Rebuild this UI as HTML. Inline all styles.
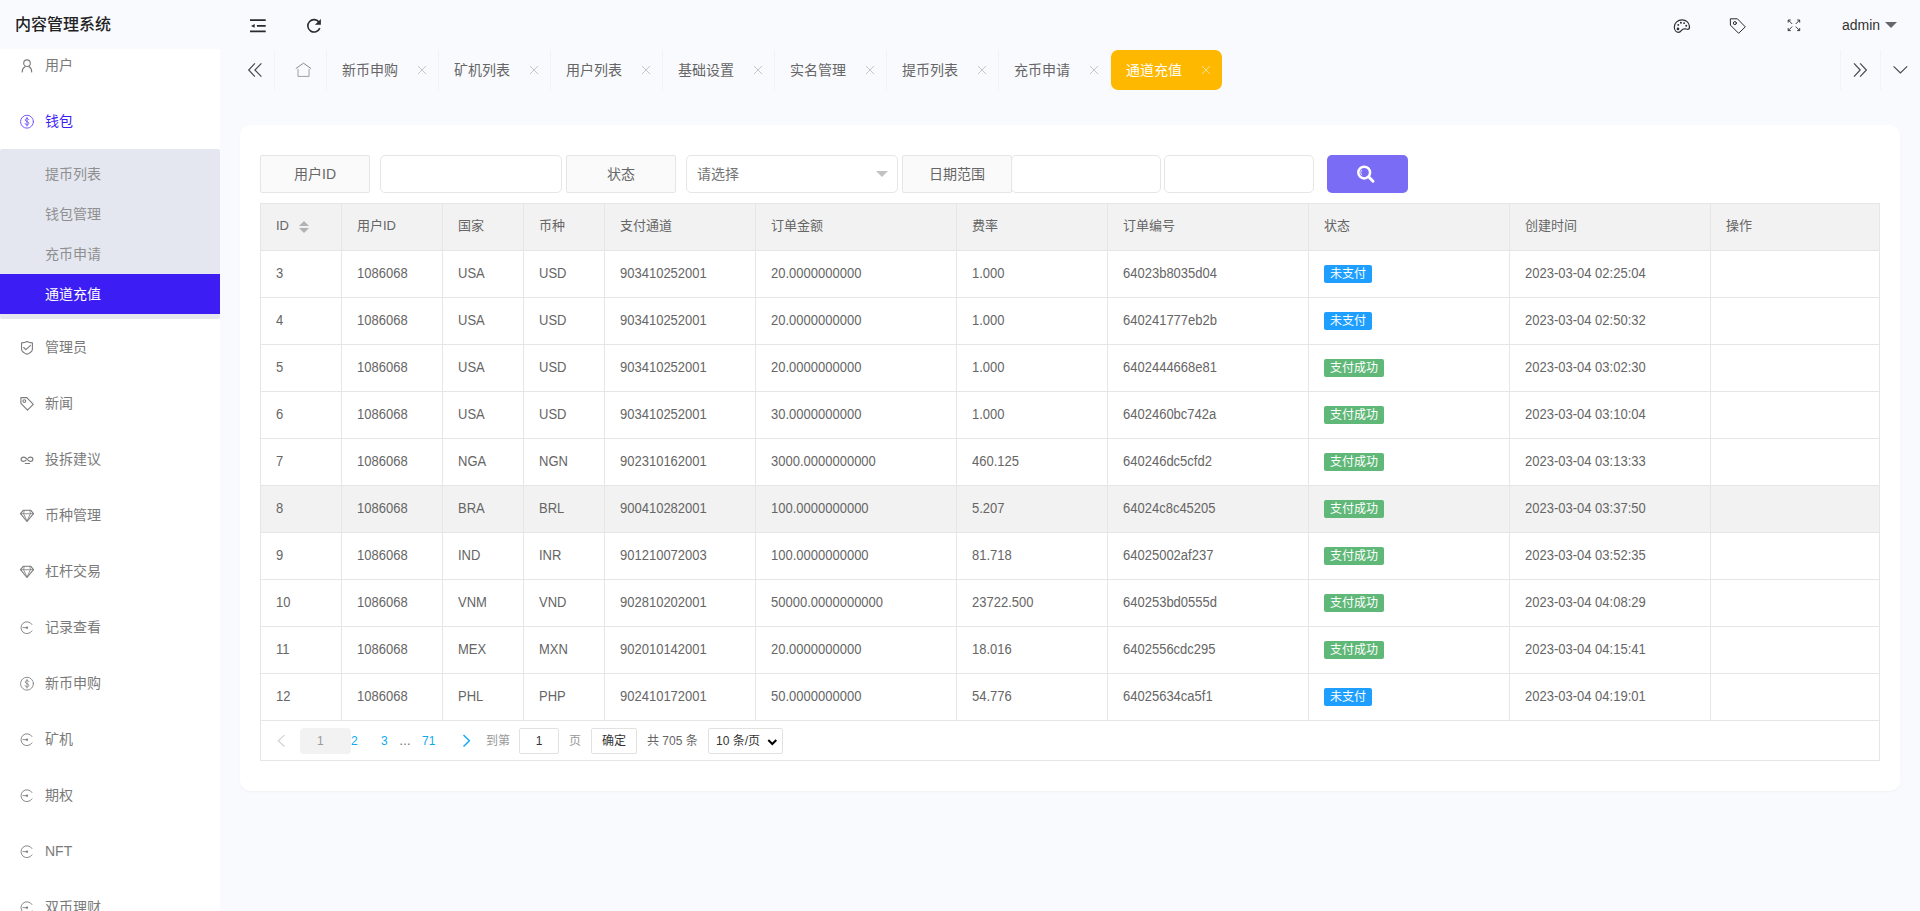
<!DOCTYPE html>
<html lang="zh-CN">
<head>
<meta charset="utf-8">
<title>内容管理系统</title>
<style>
*{box-sizing:border-box;margin:0;padding:0}
html,body{width:1920px;height:911px;overflow:hidden}
body{background:#f9fafe;font-family:"Liberation Sans","Noto Sans CJK SC",sans-serif;font-size:14px;color:#666;position:relative;line-height:1}
a{text-decoration:none;color:inherit}
i{font-style:normal}
svg{display:block}
.logo{position:absolute;left:15px;top:1px;height:49px;line-height:48px;font-size:16px;font-weight:500;color:#222;white-space:nowrap}
.side{position:absolute;left:0;top:49px;width:220px;height:862px;background:#fff;overflow:hidden}
.side .mi{position:absolute;left:0;width:220px;height:56px;margin-top:-49px;color:#7a7a7a;display:block}
.side .mi span{position:absolute;left:45px;top:0;line-height:56px;font-size:14px;white-space:nowrap}
.side .mi svg{position:absolute;left:19px;top:20px;width:16px;height:16px;overflow:visible;color:#7b7b7b;stroke-width:1.1}
.side .mi.on svg{color:#5a40f6}
.side .mi.on{color:#3c1ef5}
.side .sub{position:absolute;left:0;width:220px;height:170px;margin-top:-49px;background:#e4e7ef;border-radius:2px;padding:5px 0}
.side .si{display:block;height:40px;line-height:40px;padding-left:45px;color:#8f8f8f;font-size:14px}
.side .si.act{background:#3c1ef5;color:#fff}
.hd{position:absolute;left:220px;top:0;width:1700px;height:50px}
.hd .hi{position:absolute;width:16px;height:16px;margin-left:-220px;color:#2a2a2a}
.hd .hi svg{width:16px;height:16px;overflow:visible}
.hd .admin{position:absolute;left:1622px;top:0;line-height:50px;font-size:14px;color:#333}
.hd .caret{position:absolute;left:1665px;top:22px;width:0;height:0;border:6px solid transparent;border-top-color:#666;border-bottom:0}
.tabs{position:absolute;left:0;top:50px;width:1920px;height:40px}
.tabs .tb{position:absolute;top:0;height:40px;border-right:1px solid #f3f2f4;color:#4a4a4a}
.tabs .tb.hm{color:#8a8a8a}
.tabs .tb.r{border-right:0;border-left:1px solid #f3f2f4}
.tabs .tb svg{position:absolute;left:50%;top:50%;width:16px;height:16px;margin:-8px 0 0 -8px;overflow:visible}
.tabs .tab{position:absolute;top:0;width:112px;height:40px;border-right:1px solid #f3f2f4;color:#666;font-size:14px}
.tabs .tab span{position:absolute;left:15px;top:0;line-height:40px;white-space:nowrap}
.tabs .tab b{position:absolute;left:90px;top:15px;width:10px;height:10px;color:#c3c3cc;font-weight:normal}
.tabs .tab b svg{width:10px;height:10px;overflow:visible}
.tabs .tab.on{background:#ffb800;color:#fff;border-radius:7px;border:0;left:1111px !important;width:111px}
.tabs .tab.on span{left:15px}
.tabs .tab.on b{left:90px;color:#ffdf90}
.card{position:absolute;left:240px;top:125px;width:1660px;height:666px;background:#fff;border-radius:10px;box-shadow:0 1px 2px 0 rgba(0,0,0,.04)}
.form{position:absolute;left:0;top:30px;width:1660px;height:38px}
.form .lb{position:absolute;top:0;width:110px;height:38px;line-height:36px;text-align:center;border:1px solid #e6e6e6;background:#fafafa;border-radius:2px;color:#666;font-size:14px}
.form .ip{position:absolute;top:0;height:38px;border:1px solid #e6e6e6;border-radius:5px;background:#fff}
.form .sel span{position:absolute;left:10px;top:0;line-height:36px;color:#757575;font-size:14px}
.form .sel i{position:absolute;right:9px;top:15px;width:0;height:0;border:6px solid transparent;border-top-color:#c2c2c2;border-bottom:0}
.form .btn{position:absolute;top:0;width:81px;height:38px;border:0;border-radius:5px;background:#7b6cf6;color:#fff}
.form .btn svg{position:absolute;left:30px;top:9px;width:20px;height:20px;overflow:visible}
.tbl{position:absolute;left:20px;top:78px;width:1620px;table-layout:fixed;border-collapse:separate;border-spacing:0;border:1px solid #e6e6e6;border-right:0;border-bottom:0;font-size:13px;color:#666}
.tbl th,.tbl td{height:47px;border-right:1px solid #e6e6e6;border-bottom:1px solid #e6e6e6;padding:0 0 2px 15px;text-align:left;font-weight:normal;white-space:nowrap;vertical-align:middle;overflow:hidden}
.tbl th{background:#f2f2f2;height:47px;padding-bottom:3px}
.tbl tr.hv td{background:#f2f2f2}
.tbl .sort{display:inline-block;position:relative;width:10px;height:0;margin-left:10px;vertical-align:baseline}
.tbl .sort i{position:absolute;left:0;width:0;height:0;border:5px solid transparent}
.tbl .sort .up{top:-9px;border-bottom-color:#b2b2b2;border-top:0}
.tbl .sort .dn{top:-2px;border-top-color:#b2b2b2;border-bottom:0}
.tbl .n{display:inline-block;transform:scaleY(1.075);transform-origin:50% 78%}
.tag{position:relative;top:1px;display:inline-block;height:18px;line-height:18px;padding:0 6px;font-size:12px;color:#fff;border-radius:2px;vertical-align:middle}
.tag.b{background:#1e9fff}
.tag.g{background:#5fb878}
.pg{position:absolute;left:20px;top:595px;width:1620px;height:41px;border:1px solid #e6e6e6;font-size:12px;color:#666}
.pg>*{position:absolute;white-space:nowrap}
.pg .pv{left:15px;top:13px;width:12px;height:12px;color:#d2d2d2}
.pg .nx{left:199px;top:13px;width:12px;height:12px;color:#10a9f0}
.pg svg{width:12px;height:12px;overflow:visible}
.pg .cur{left:39px;top:7px;width:51px;height:26px;line-height:26px;background:#f2f2f2;border-radius:4px;color:#999;text-indent:17px}
.pg a{top:7px;line-height:26px;color:#10a9f0;font-size:12px}
.pg .dots{left:138px;top:7px;line-height:26px;color:#666}
.pg .t1{left:225px;top:7px;line-height:26px;color:#999}
.pg .pin{left:258px;top:7px;width:40px;height:26px;line-height:24px;border:1px solid #e2e2e2;border-radius:2px;text-align:center;color:#333;background:#fff}
.pg .t2{left:308px;top:7px;line-height:26px;color:#999}
.pg .pbtn{left:330px;top:7px;width:46px;height:26px;line-height:24px;border:1px solid #e2e2e2;border-radius:2px;text-align:center;color:#333;background:#fff}
.pg .t3{left:386px;top:7px;line-height:26px;color:#666}
.pg .psel{left:447px;top:7px;width:75px;height:26px;line-height:24px;border:1px solid #e2e2e2;border-radius:2px;padding-left:7px;color:#333;background:#fff}
.pg .psel svg{position:absolute;right:5px;top:8px;width:10px;height:10px}

</style>
</head>
<body>
<div class="logo">内容管理系统</div>
<div class="side">
<a class="mi" style="top:37px"><svg viewBox="0 0 16 16" fill="none" stroke="currentColor" stroke-width="1" stroke-linecap="round" stroke-linejoin="round" ><circle cx="8" cy="6.2" r="3.3"/><path d="M3.200 14.900C3.200 12.300 4.300 10.600 6.100 9.800M9.900 9.800C11.700 10.600 12.700 12.300 12.700 14.900"/></svg><span>用户</span></a>
<a class="mi on" style="top:93px"><svg viewBox="0 0 16 16" fill="none" stroke="currentColor" stroke-width="1" stroke-linecap="round" stroke-linejoin="round" ><circle cx="8" cy="8.700" r="6.450" stroke-width=".85"/><path d="M9.800 6.700C9.500 5.900 8.900 5.500 8 5.500C7 5.500 6.300 6.100 6.300 6.900C6.300 9 9.800 8.200 9.800 10.400C9.800 11.300 9 11.900 8 11.900C7 11.900 6.300 11.400 6.100 10.600M8 4.400V13" stroke-width=".8"/></svg><span>钱包</span></a>
<div class="sub" style="top:149px">
<a class="si"><span>提币列表</span></a>
<a class="si"><span>钱包管理</span></a>
<a class="si"><span>充币申请</span></a>
<a class="si act"><span>通道充值</span></a>
</div>
<a class="mi" style="top:319px"><svg viewBox="0 0 16 16" fill="none" stroke="currentColor" stroke-width="1" stroke-linecap="round" stroke-linejoin="round" ><path d="M8 2.500C6.500 3.300 4.500 3.800 2.550 3.900V10.300C2.550 12.400 5 14 8 15.300C11 14 13.400 12.400 13.400 10.300V3.900C11.500 3.800 9.500 3.300 8 2.500z"/><path d="M4.700 8.500L6.900 10.600L11.500 6.300"/></svg><span>管理员</span></a>
<a class="mi" style="top:375px"><svg viewBox="0 0 16 16" fill="none" stroke="currentColor" stroke-width="1" stroke-linecap="round" stroke-linejoin="round" ><path d="M1.900 2.600H7.800L14.300 9.400L8.500 15.200L1.900 8.400z"/><circle cx="5.300" cy="6.100" r="1.400"/></svg><span>新闻</span></a>
<a class="mi" style="top:431px"><svg viewBox="0 0 16 16" fill="none" stroke="currentColor" stroke-width="1" stroke-linecap="round" stroke-linejoin="round" ><path d="M8 8.200C6.800 6.800 5.900 6.100 4.600 6.100C3.200 6.100 2.100 7 2.100 8.200C2.100 9.400 3.200 10.300 4.600 10.300C5.500 10.300 6.200 9.900 6.900 9.300M8 8.200C9.200 9.600 10.100 10.300 11.400 10.300C12.800 10.300 13.900 9.400 13.900 8.200C13.900 7 12.800 6.100 11.400 6.100C10.500 6.100 9.800 6.500 9.100 7.100" stroke-width="1.150"/><path d="M6.300 12.500H10.500"/></svg><span>投拆建议</span></a>
<a class="mi" style="top:487px"><svg viewBox="0 0 16 16" fill="none" stroke="currentColor" stroke-width="1" stroke-linecap="round" stroke-linejoin="round" ><path d="M4.200 3.300H11.800L14.500 6.700L8 14.500L1.500 6.700z"/><path d="M1.700 6.700H14.300M5.200 3.500L4.600 6.700L8 14.200L11.400 6.700L10.800 3.500" stroke-width=".8"/></svg><span>币种管理</span></a>
<a class="mi" style="top:543px"><svg viewBox="0 0 16 16" fill="none" stroke="currentColor" stroke-width="1" stroke-linecap="round" stroke-linejoin="round" ><path d="M4.200 3.300H11.800L14.500 6.700L8 14.500L1.500 6.700z"/><path d="M1.700 6.700H14.300M5.200 3.500L4.600 6.700L8 14.200L11.400 6.700L10.800 3.500" stroke-width=".8"/></svg><span>杠杆交易</span></a>
<a class="mi" style="top:599px"><svg viewBox="0 0 16 16" fill="none" stroke="currentColor" stroke-width="1" stroke-linecap="round" stroke-linejoin="round" ><path d="M13 5.500A5.950 5.950 0 1 0 13 11.900" stroke-width=".9"/><path d="M4 8.700H8" stroke-width=".9"/><circle cx="8" cy="8.700" r="1.150" fill="currentColor" stroke="none"/></svg><span>记录查看</span></a>
<a class="mi" style="top:655px"><svg viewBox="0 0 16 16" fill="none" stroke="currentColor" stroke-width="1" stroke-linecap="round" stroke-linejoin="round" ><circle cx="8" cy="8.700" r="6.450" stroke-width=".85"/><path d="M9.800 6.700C9.500 5.900 8.900 5.500 8 5.500C7 5.500 6.300 6.100 6.300 6.900C6.300 9 9.800 8.200 9.800 10.400C9.800 11.300 9 11.900 8 11.900C7 11.900 6.300 11.400 6.100 10.600M8 4.400V13" stroke-width=".8"/></svg><span>新币申购</span></a>
<a class="mi" style="top:711px"><svg viewBox="0 0 16 16" fill="none" stroke="currentColor" stroke-width="1" stroke-linecap="round" stroke-linejoin="round" ><path d="M13 5.500A5.950 5.950 0 1 0 13 11.900" stroke-width=".9"/><path d="M4 8.700H8" stroke-width=".9"/><circle cx="8" cy="8.700" r="1.150" fill="currentColor" stroke="none"/></svg><span>矿机</span></a>
<a class="mi" style="top:767px"><svg viewBox="0 0 16 16" fill="none" stroke="currentColor" stroke-width="1" stroke-linecap="round" stroke-linejoin="round" ><path d="M13 5.500A5.950 5.950 0 1 0 13 11.900" stroke-width=".9"/><path d="M4 8.700H8" stroke-width=".9"/><circle cx="8" cy="8.700" r="1.150" fill="currentColor" stroke="none"/></svg><span>期权</span></a>
<a class="mi" style="top:823px"><svg viewBox="0 0 16 16" fill="none" stroke="currentColor" stroke-width="1" stroke-linecap="round" stroke-linejoin="round" ><path d="M13 5.500A5.950 5.950 0 1 0 13 11.900" stroke-width=".9"/><path d="M4 8.700H8" stroke-width=".9"/><circle cx="8" cy="8.700" r="1.150" fill="currentColor" stroke="none"/></svg><span>NFT</span></a>
<a class="mi" style="top:879px"><svg viewBox="0 0 16 16" fill="none" stroke="currentColor" stroke-width="1" stroke-linecap="round" stroke-linejoin="round" ><path d="M13 5.500A5.950 5.950 0 1 0 13 11.900" stroke-width=".9"/><path d="M4 8.700H8" stroke-width=".9"/><circle cx="8" cy="8.700" r="1.150" fill="currentColor" stroke="none"/></svg><span>双币理财</span></a>
</div>
<div class="hd">
<i class="hi" style="left:250px;top:18px"><svg viewBox="0 0 16 16" fill="none" stroke="currentColor" stroke-width="1" stroke-linecap="round" stroke-linejoin="round" ><path d="M0 2.200H15.700M6.900 7.900H15.700M0 13.400H15.700" stroke-width="1.700" stroke-linecap="butt"/><path d="M1 7.900L4.700 6V9.800z" fill="currentColor" stroke="none"/></svg></i>
<i class="hi" style="left:306px;top:18px"><svg viewBox="0 0 16 16" fill="none" stroke="currentColor" stroke-width="1" stroke-linecap="round" stroke-linejoin="round" ><path d="M13.200 4.400A6.200 6.200 0 1 0 13.800 10.100" stroke-width="1.600" stroke-linecap="butt"/><path d="M14.900 1V6.800H8.900z" fill="currentColor" stroke="none"/></svg></i>
<i class="hi" style="left:1674px;top:18px"><svg viewBox="0 0 16 16" fill="none" stroke="currentColor" stroke-width="1" stroke-linecap="round" stroke-linejoin="round" ><path stroke-width="1.150" d="M8.200 1.800C3.800 1.800 .3 4.800 .3 9C.3 12.200 2.300 14.300 4.600 14.300C7.300 14.300 7.300 10.800 10.500 10.700C12 10.700 13 11.600 14.200 11.300C15.300 11 15.600 9.500 15.400 8C15 4.500 12 1.800 8.200 1.800z"/><circle cx="4" cy="10.900" r="1.300" fill="currentColor" stroke="none"/><circle cx="4.300" cy="6.900" r=".95" fill="currentColor" stroke="none"/><circle cx="6.900" cy="4.800" r=".95" fill="currentColor" stroke="none"/><circle cx="10.100" cy="5.100" r=".95" fill="currentColor" stroke="none"/><circle cx="12.200" cy="7.800" r=".95" fill="currentColor" stroke="none"/></svg></i>
<i class="hi" style="left:1730px;top:18px"><svg viewBox="0 0 16 16" fill="none" stroke="currentColor" stroke-width="1" stroke-linecap="round" stroke-linejoin="round" ><path d="M.7 .8H7.400L15.300 8.900L8.600 15.300L.7 7.400z"/><circle cx="4.900" cy="5.100" r="1.500"/></svg></i>
<i class="hi" style="left:1786px;top:18px"><svg viewBox="0 0 16 16" fill="none" stroke="currentColor" stroke-width="1" stroke-linecap="round" stroke-linejoin="round" ><path d="M2.200 4.600V2H4.800M2.200 2L6.200 6M11.100 2H13.700V4.600M13.700 2L9.700 6M2.200 10V12.600H4.800M2.200 12.600L6.200 8.600M13.700 10V12.600H11.100M13.700 12.600L9.700 8.600" stroke-linecap="butt" stroke-width=".9"/></svg></i>
<span class="admin">admin</span><i class="caret"></i>
</div>
<div class="tabs">
<i class="tb" style="left:240px;width:35px"><svg viewBox="0 0 16 16" fill="none" stroke="currentColor" stroke-width="1" stroke-linecap="round" stroke-linejoin="round" ><path d="M5.900 1.300L-.3 8L5.900 14.700M12.400 1.300L5.900 8L12.400 14.700" stroke-width="1.200" stroke-linecap="butt" stroke-linejoin="miter"/></svg></i>
<i class="tb hm" style="left:275px;width:52px"><svg viewBox="0 0 16 16" fill="none" stroke="currentColor" stroke-width="1" stroke-linecap="round" stroke-linejoin="round" ><path d="M2.800 6.600L10.470 1.200L18.100 6.600" stroke-linejoin="miter" stroke-linecap="butt"/><path d="M5 7V14.420H16.050V7" stroke-linejoin="miter" stroke-linecap="butt" opacity=".8"/></svg></i>
<div class="tab" style="left:327px"><span>新币申购</span><b><svg viewBox="0 0 10 10" fill="none" stroke="currentColor" stroke-width="1" stroke-linecap="round" stroke-linejoin="round" ><path d="M1 1l8 8M9 1L1 9" stroke-width="1" stroke-linecap="butt"/></svg></b></div>
<div class="tab" style="left:439px"><span>矿机列表</span><b><svg viewBox="0 0 10 10" fill="none" stroke="currentColor" stroke-width="1" stroke-linecap="round" stroke-linejoin="round" ><path d="M1 1l8 8M9 1L1 9" stroke-width="1" stroke-linecap="butt"/></svg></b></div>
<div class="tab" style="left:551px"><span>用户列表</span><b><svg viewBox="0 0 10 10" fill="none" stroke="currentColor" stroke-width="1" stroke-linecap="round" stroke-linejoin="round" ><path d="M1 1l8 8M9 1L1 9" stroke-width="1" stroke-linecap="butt"/></svg></b></div>
<div class="tab" style="left:663px"><span>基础设置</span><b><svg viewBox="0 0 10 10" fill="none" stroke="currentColor" stroke-width="1" stroke-linecap="round" stroke-linejoin="round" ><path d="M1 1l8 8M9 1L1 9" stroke-width="1" stroke-linecap="butt"/></svg></b></div>
<div class="tab" style="left:775px"><span>实名管理</span><b><svg viewBox="0 0 10 10" fill="none" stroke="currentColor" stroke-width="1" stroke-linecap="round" stroke-linejoin="round" ><path d="M1 1l8 8M9 1L1 9" stroke-width="1" stroke-linecap="butt"/></svg></b></div>
<div class="tab" style="left:887px"><span>提币列表</span><b><svg viewBox="0 0 10 10" fill="none" stroke="currentColor" stroke-width="1" stroke-linecap="round" stroke-linejoin="round" ><path d="M1 1l8 8M9 1L1 9" stroke-width="1" stroke-linecap="butt"/></svg></b></div>
<div class="tab" style="left:999px"><span>充币申请</span><b><svg viewBox="0 0 10 10" fill="none" stroke="currentColor" stroke-width="1" stroke-linecap="round" stroke-linejoin="round" ><path d="M1 1l8 8M9 1L1 9" stroke-width="1" stroke-linecap="butt"/></svg></b></div>
<div class="tab on" style="left:1111px"><span>通道充值</span><b><svg viewBox="0 0 10 10" fill="none" stroke="currentColor" stroke-width="1" stroke-linecap="round" stroke-linejoin="round" ><path d="M1 1l8 8M9 1L1 9" stroke-width="1" stroke-linecap="butt"/></svg></b></div>
<i class="tb r" style="left:1840px;width:40px"><svg viewBox="0 0 16 16" fill="none" stroke="currentColor" stroke-width="1" stroke-linecap="round" stroke-linejoin="round" ><path d="M1 1.300L7.200 8L1 14.700M7.100 1.300L13.400 8L7.100 14.700" stroke-width="1.200" stroke-linecap="butt" stroke-linejoin="miter"/></svg></i>
<i class="tb r" style="left:1880px;width:40px"><svg viewBox="0 0 16 16" fill="none" stroke="currentColor" stroke-width="1" stroke-linecap="round" stroke-linejoin="round" ><path d="M.6 4.400L7.400 10.900L14.200 4.400" stroke-width="1.200" stroke-linecap="butt" stroke-linejoin="miter"/></svg></i>
</div>
<div class="card">
<div class="form">
<label class="lb" style="left:20px">用户ID</label><div class="ip" style="left:140px;width:182px"></div>
<label class="lb" style="left:326px">状态</label><div class="ip sel" style="left:446px;width:212px"><span>请选择</span><i></i></div>
<label class="lb" style="left:662px">日期范围</label><div class="ip" style="left:771px;width:150px"></div><div class="ip" style="left:924px;width:150px"></div>
<button class="btn" style="left:1087px"><svg viewBox="0 0 20 20" fill="none" stroke="currentColor" stroke-width="1" stroke-linecap="round" stroke-linejoin="round" ><circle cx="7.200" cy="8.550" r="5.900" stroke-width="2.500"/><path d="M4.400 6.300A3.600 3.600 0 0 0 4.400 10.800" stroke-width="1" opacity=".85"/><path d="M12.100 13.300l3.900 3.900" stroke-width="3" stroke-linecap="round"/></svg></button>
</div>
<table class="tbl" cellspacing="0" cellpadding="0">
<colgroup><col style="width:81px"><col style="width:101px"><col style="width:81px"><col style="width:81px"><col style="width:151px"><col style="width:201px"><col style="width:151px"><col style="width:201px"><col style="width:201px"><col style="width:201px"><col style="width:169px"></colgroup>
<thead><tr><th><span>ID</span><span class="sort"><i class="up"></i><i class="dn"></i></span></th><th>用户ID</th><th>国家</th><th>币种</th><th>支付通道</th><th>订单金额</th><th>费率</th><th>订单编号</th><th>状态</th><th>创建时间</th><th>操作</th></tr></thead>
<tbody>
<tr><td><span class="n">3</span></td><td><span class="n">1086068</span></td><td><span class="n">USA</span></td><td><span class="n">USD</span></td><td><span class="n">903410252001</span></td><td><span class="n">20.0000000000</span></td><td><span class="n">1.000</span></td><td><span class="n">64023b8035d04</span></td><td><span class="tag b">未支付</span></td><td><span class="n">2023-03-04 02:25:04</span></td><td></td></tr>
<tr><td><span class="n">4</span></td><td><span class="n">1086068</span></td><td><span class="n">USA</span></td><td><span class="n">USD</span></td><td><span class="n">903410252001</span></td><td><span class="n">20.0000000000</span></td><td><span class="n">1.000</span></td><td><span class="n">640241777eb2b</span></td><td><span class="tag b">未支付</span></td><td><span class="n">2023-03-04 02:50:32</span></td><td></td></tr>
<tr><td><span class="n">5</span></td><td><span class="n">1086068</span></td><td><span class="n">USA</span></td><td><span class="n">USD</span></td><td><span class="n">903410252001</span></td><td><span class="n">20.0000000000</span></td><td><span class="n">1.000</span></td><td><span class="n">6402444668e81</span></td><td><span class="tag g">支付成功</span></td><td><span class="n">2023-03-04 03:02:30</span></td><td></td></tr>
<tr><td><span class="n">6</span></td><td><span class="n">1086068</span></td><td><span class="n">USA</span></td><td><span class="n">USD</span></td><td><span class="n">903410252001</span></td><td><span class="n">30.0000000000</span></td><td><span class="n">1.000</span></td><td><span class="n">6402460bc742a</span></td><td><span class="tag g">支付成功</span></td><td><span class="n">2023-03-04 03:10:04</span></td><td></td></tr>
<tr><td><span class="n">7</span></td><td><span class="n">1086068</span></td><td><span class="n">NGA</span></td><td><span class="n">NGN</span></td><td><span class="n">902310162001</span></td><td><span class="n">3000.0000000000</span></td><td><span class="n">460.125</span></td><td><span class="n">640246dc5cfd2</span></td><td><span class="tag g">支付成功</span></td><td><span class="n">2023-03-04 03:13:33</span></td><td></td></tr>
<tr class="hv"><td><span class="n">8</span></td><td><span class="n">1086068</span></td><td><span class="n">BRA</span></td><td><span class="n">BRL</span></td><td><span class="n">900410282001</span></td><td><span class="n">100.0000000000</span></td><td><span class="n">5.207</span></td><td><span class="n">64024c8c45205</span></td><td><span class="tag g">支付成功</span></td><td><span class="n">2023-03-04 03:37:50</span></td><td></td></tr>
<tr><td><span class="n">9</span></td><td><span class="n">1086068</span></td><td><span class="n">IND</span></td><td><span class="n">INR</span></td><td><span class="n">901210072003</span></td><td><span class="n">100.0000000000</span></td><td><span class="n">81.718</span></td><td><span class="n">64025002af237</span></td><td><span class="tag g">支付成功</span></td><td><span class="n">2023-03-04 03:52:35</span></td><td></td></tr>
<tr><td><span class="n">10</span></td><td><span class="n">1086068</span></td><td><span class="n">VNM</span></td><td><span class="n">VND</span></td><td><span class="n">902810202001</span></td><td><span class="n">50000.0000000000</span></td><td><span class="n">23722.500</span></td><td><span class="n">640253bd0555d</span></td><td><span class="tag g">支付成功</span></td><td><span class="n">2023-03-04 04:08:29</span></td><td></td></tr>
<tr><td><span class="n">11</span></td><td><span class="n">1086068</span></td><td><span class="n">MEX</span></td><td><span class="n">MXN</span></td><td><span class="n">902010142001</span></td><td><span class="n">20.0000000000</span></td><td><span class="n">18.016</span></td><td><span class="n">6402556cdc295</span></td><td><span class="tag g">支付成功</span></td><td><span class="n">2023-03-04 04:15:41</span></td><td></td></tr>
<tr><td><span class="n">12</span></td><td><span class="n">1086068</span></td><td><span class="n">PHL</span></td><td><span class="n">PHP</span></td><td><span class="n">902410172001</span></td><td><span class="n">50.0000000000</span></td><td><span class="n">54.776</span></td><td><span class="n">64025634ca5f1</span></td><td><span class="tag b">未支付</span></td><td><span class="n">2023-03-04 04:19:01</span></td><td></td></tr>
</tbody></table>
<div class="pg">
<span class="pv"><svg viewBox="0 0 12 12" fill="none" stroke="currentColor" stroke-width="1" stroke-linecap="round" stroke-linejoin="round" ><path d="M8.500 1.100L2.200 6.800l6.300 5.700" stroke-width="1.200" stroke-linecap="butt" stroke-linejoin="miter"/></svg></span><span class="cur">1</span><a style="left:90px">2</a><a style="left:120px">3</a><span class="dots">…</span><a style="left:161px">71</a><span class="nx"><svg viewBox="0 0 12 12" fill="none" stroke="currentColor" stroke-width="1" stroke-linecap="round" stroke-linejoin="round" ><path d="M3.500 1.100L9.400 6.800l-5.900 5.700" stroke-width="1.400" stroke-linecap="butt" stroke-linejoin="miter"/></svg></span><span class="t1">到第</span><span class="pin">1</span><span class="t2">页</span><span class="pbtn">确定</span><span class="t3">共 705 条</span><span class="psel">10 条/页<svg viewBox="0 0 10 10" fill="none" stroke="currentColor" stroke-width="1" stroke-linecap="round" stroke-linejoin="round" ><path d="M1.300 3l4 4 4-4" stroke-width="2" stroke="#000" stroke-linecap="butt" stroke-linejoin="miter"/></svg></span>
</div>
</div>
</body>
</html>
